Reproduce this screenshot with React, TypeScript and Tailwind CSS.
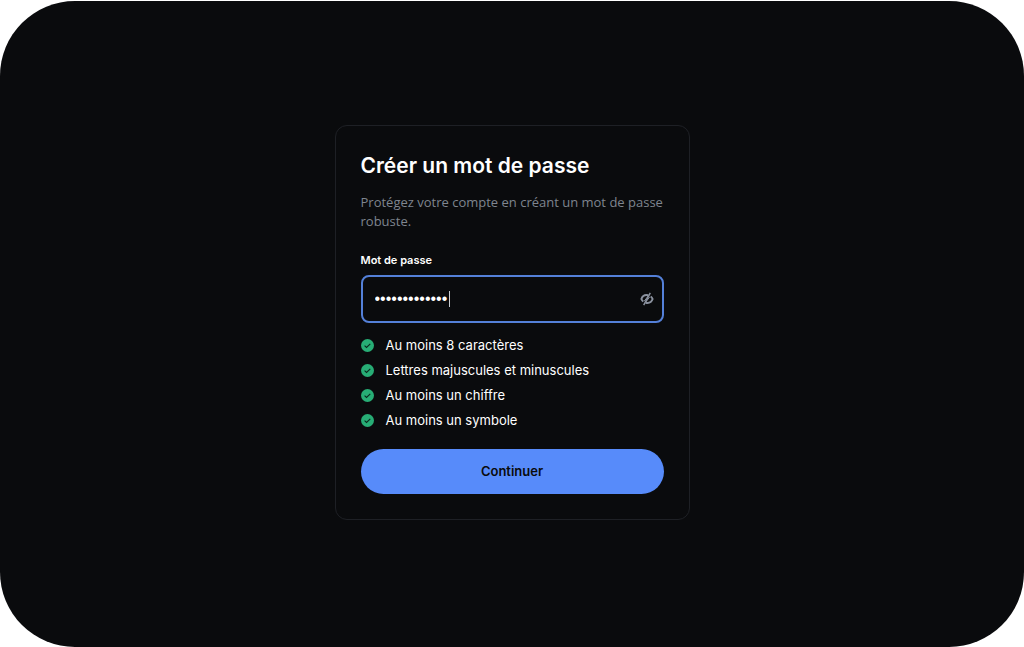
import React, { useState } from 'react';

const RULES = [
  'Au moins 8 caractères',
  'Lettres majuscules et minuscules',
  'Au moins un chiffre',
  'Au moins un symbole',
];

function CheckBadge() {
  return (
    <svg className="w-[13px] h-[13px] shrink-0" viewBox="0 0 13 13" aria-hidden="true">
      <circle cx="6.5" cy="6.5" r="6.5" fill="#27ad75" />
      <path d="M3.6 6.7l1.9 1.8 3.8-3.7" fill="none" stroke="#0a2a1e" strokeWidth="1.1" />
    </svg>
  );
}

function HiddenEye() {
  return (
    <svg className="w-[14px] h-[14px]" viewBox="0 0 14 14" fill="none" stroke="#8a919e" aria-hidden="true">
      <path d="M8.4 3.3C4.6 2.5 2.2 4.7 1.4 7c.4 1 1 1.9 1.9 2.5" strokeWidth="2" />
      <path d="M5.6 10.7c3.8.8 6.2-1.4 7-3.7-.4-1-1-1.9-1.9-2.5" strokeWidth="2" />
      <path d="M4.2 9.2L8.2 4M9.8 4.8L5.8 10" strokeWidth="1" />
      <path d="M10.3 .8L3.7 13.2" strokeWidth="1.5" />
    </svg>
  );
}

export default function App() {
  const [password, setPassword] = useState('Motdepasse12!');
  const [visible, setVisible] = useState(false);
  const [editing, setEditing] = useState(false);

  return (
    <div className="min-h-screen flex flex-col bg-white pt-px font-['Inter',sans-serif]">
      <main className="flex-1 flex items-center justify-center rounded-[75px] bg-[#0a0b0d] px-4 pb-[3px]">
        <form
          onSubmit={(e) => e.preventDefault()}
          className="w-full max-w-[355px] rounded-xl border border-[#1e2025] p-[25px]"
        >
          <h1 className="text-[21px] leading-[30px] font-semibold text-white">Créer un mot de passe</h1>
          <p className="mt-3 font-['Open_Sans',sans-serif] text-[13px] leading-[19px] text-[#7f858f]">
            Protégez votre compte en créant un mot de passe robuste.
          </p>

          <label htmlFor="password" className="mt-5 block text-[11px] leading-[18px] font-semibold text-white">
            Mot de passe
          </label>
          <div className="relative mt-1.5">
            <input
              id="password"
              type={visible ? 'text' : 'password'}
              value={password}
              onChange={(e) => setPassword(e.target.value)}
              onFocus={() => setEditing(true)}
              className="block h-12 w-full rounded-lg border-2 border-[#5480d8] bg-transparent pl-3 pr-12 font-['Liberation_Sans',sans-serif] text-[16px] text-white outline-none"
            />
            {!editing && <span className="absolute left-[88px] top-4 h-4 w-px bg-[#c9ccd1]" />}
            <button
              type="button"
              aria-label="Afficher le mot de passe"
              onClick={() => setVisible(!visible)}
              className="absolute right-2.5 top-1/2 -translate-y-1/2 cursor-pointer"
            >
              <HiddenEye />
            </button>
          </div>

          <ul className="mt-3.5 flex flex-col gap-2">
            {RULES.map((rule) => (
              <li key={rule} className="flex items-center gap-3 text-[13px] leading-[17px] text-white">
                <CheckBadge />
                {rule}
              </li>
            ))}
          </ul>

          <button
            type="submit"
            className="mt-5 h-[45px] w-full cursor-pointer rounded-full bg-[#578bfa] text-[13px] font-semibold text-[#0a0b0d]"
          >
            Continuer
          </button>
        </form>
      </main>
    </div>
  );
}
